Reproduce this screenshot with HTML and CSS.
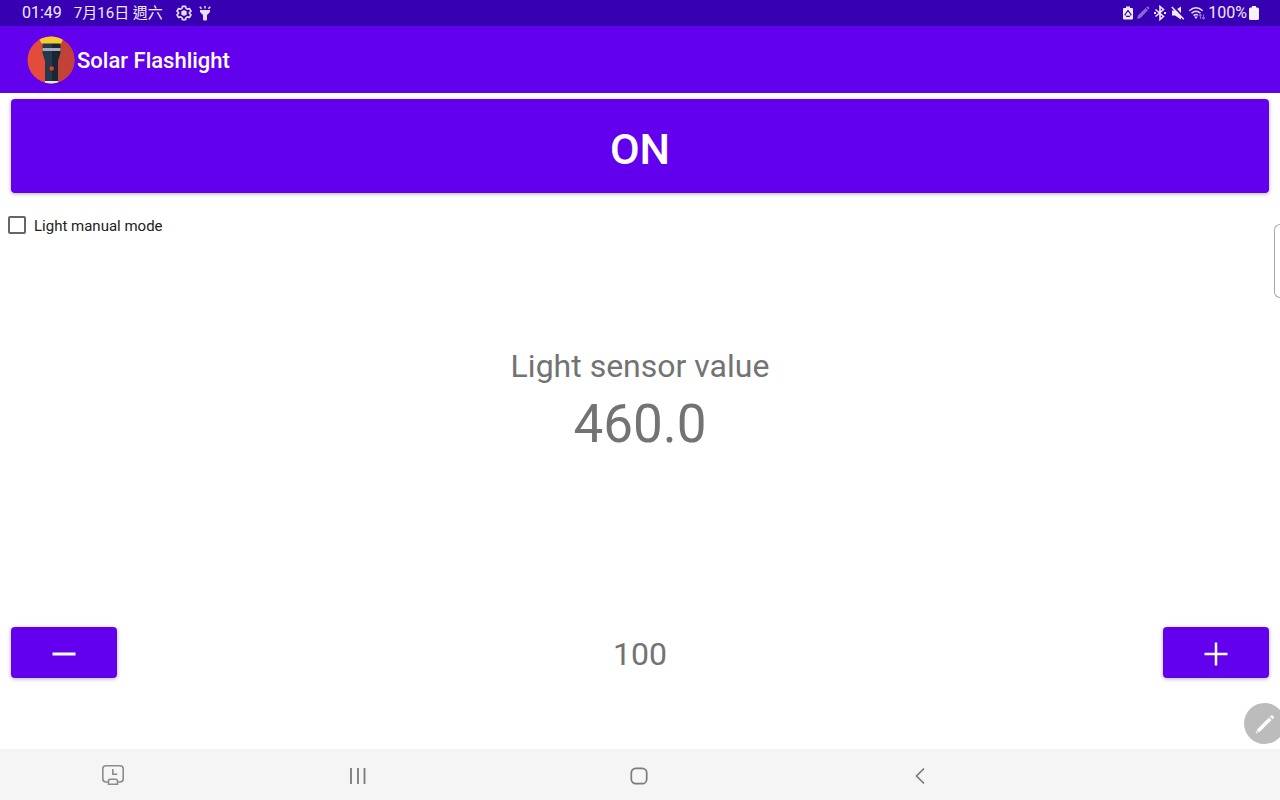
FILE: index.html
```html
<!DOCTYPE html>
<html lang="en">
<head>
  <meta charset="UTF-8">
  <meta name="viewport" content="width=device-width, initial-scale=1">
  <title>Solar Flashlight</title>
  <link rel="stylesheet" href="styles.css">
</head>
<body>
  <div class="status-bar">
    <div class="status-left">
      <span>01:49</span>
      <span class="date" lang="zh-Hant">7月16日 週六</span>
      <svg class="gear" width="16" height="16" viewBox="0 0 24 24" fill="none" stroke="#e8e0fa" stroke-width="2.4" stroke-linejoin="round">
        <path d="M9.6 2h4.8l.7 3 2 1.200 3-1 2.400 4.200-2.300 2v1.200l2.300 2-2.400 4.200-3-1-2 1.200-.7 3H9.600l-.7-3-2-1.200-3 1-2.400-4.200 2.300-2v-1.200l-2.300-2 2.400-4.200 3 1 2-1.200z"/>
        <circle cx="12" cy="12" r="3" fill="#e8e0fa"/>
      </svg>
      <svg width="14" height="16" viewBox="0 0 14 16" fill="#e8e0fa">
        <path d="M2 5h10v2L9 10v4.500a1 1 0 0 1-1 1H6a1 1 0 0 1-1-1V10L2 7z"/>
        <path d="M7 1v2.500M1.800 1.800l1.700 2M12.200 1.800l-1.700 2" stroke="#e8e0fa" stroke-width="1.500"/>
      </svg>
    </div>
    <div class="status-right">
      <svg width="12" height="16" viewBox="0 0 12 16">
        <path d="M4 1.500h4V3h2q1 0 1 1v9.500q0 1-1 1H2q-1 0-1-1V4q0-1 1-1h2z" fill="#f0eafc"/>
        <path d="M3.600 10.500L3 9.500l3-4 3 4-.6 1M4 11.300h4" fill="none" stroke="#3700b3" stroke-width="1.200"/>
      </svg>
      <svg width="14" height="14" viewBox="0 0 14 14" fill="#8a69d6">
        <path d="M1 13l1-3.600L9.600 2l2.300 2.300L4.500 12zM10.200 1.400l.9-.9q.7-.3 1.300.3l.7.7q.5.7.1 1.300l-.8.8z"/>
      </svg>
      <svg width="16" height="16" viewBox="0 0 16 16" fill="none" stroke="#f0eafc" stroke-width="1.600">
        <path d="M3.500 4.500l8 7L8 14.500v-13l3.500 3-8 7"/>
        <path d="M2 8h2M12 8h2" stroke-width="2"/>
      </svg>
      <svg width="16" height="16" viewBox="0 0 16 16">
        <path d="M2 5.500h3L11 1.500v13l-6-4H2z" fill="#f0eafc"/>
        <path d="M3 1l12 13" stroke="#3700b3" stroke-width="2"/>
        <path d="M1.800 2l12 12.200" stroke="#f0eafc" stroke-width="1.500"/>
      </svg>
      <svg width="18" height="16" viewBox="0 0 18 16" fill="none" stroke="#e8e0fa" stroke-width="1.500">
        <path d="M1.300 5.800q6.700-6 13.400 0M3.500 8.300q4.500-4 9 0M5.600 10.600q2.400-2 4.400-.3"/>
        <path d="M6.200 11.600L8 14l1.800-2.400z" fill="#e8e0fa" stroke="none"/>
        <path d="M12.500 14V9.700M11 11l1.500-1.500L13.500 11M15.500 9.500v4M14 12.500l1.500 1.500 1.500-1.500" stroke="#8a69d6" stroke-width="1.200"/>
      </svg>
      <span class="battery-level">100%</span>
      <svg width="10" height="16" viewBox="0 0 10 16" fill="#f5f1ff">
        <path d="M3 1h4v1.500h1.400q1.600 0 1.600 1.500v9.500q0 1.500-1.500 1.500h-7Q0 15 0 13.500V4q0-1.500 1.500-1.500H3z"/>
      </svg>
    </div>
  </div>

  <header class="app-bar">
    <svg width="48" height="48" viewBox="0 0 48 48">
      <defs>
        <clipPath id="disc"><circle cx="24" cy="24" r="23.500"/></clipPath>
      </defs>
      <g clip-path="url(#disc)">
        <rect width="48" height="48" fill="#e34b3b"/>
        <path d="M24 0h24v48H24z" fill="#c24236"/>
        <path d="M12 0h24v3l-2 5H15l-3-5z" fill="#f6cb2f"/>
        <path d="M15.500 7.500H25V45h-7V25l-2.500-8z" fill="#26384b"/>
        <path d="M25 7.500h8.500V17L31 25v20h-6z" fill="#182736"/>
        <path d="M15.500 12h18v3h-18z" fill="#a6adb4"/>
        <path d="M18 45h13v3H18z" fill="#e4e8ea"/>
      </g>
      <circle cx="24.700" cy="32.500" r="2.200" fill="#e83c2c"/>
    </svg>
    <h1>Solar Flashlight</h1>
  </header>

  <main class="content">
    <button type="button" class="btn btn-power">ON</button>

    <div class="mode">
      <input type="checkbox" id="manualMode">
      <label for="manualMode">Light manual mode</label>
    </div>

    <div class="sensor">
      <p class="sensor-label">Light sensor value</p>
      <p class="sensor-value">460.0</p>
    </div>

    <div class="threshold">
      <button type="button" class="btn btn-step" aria-label="Decrease">
        <svg width="24" height="24" viewBox="0 0 24 24"><path d="M.5 12h23" stroke="#fff" stroke-width="3"/></svg>
      </button>
      <span class="threshold-value">100</span>
      <button type="button" class="btn btn-step" aria-label="Increase">
        <svg width="24" height="24" viewBox="0 0 24 24"><path d="M.5 12h23M12 .5v23" stroke="#fff" stroke-width="2.500"/></svg>
      </button>
    </div>
  </main>

  <nav class="nav-bar">
    <button type="button" class="nav-taskbar" aria-label="Recent apps tray">
      <svg width="24" height="22" viewBox="0 0 24 22" fill="none" stroke="#8c8c8c" stroke-width="1.600">
        <path d="M7 17H5q-3.200 0-3.200-3.200V4Q1.800.8 5 .8h14q3.200 0 3.200 3.200v9.800q0 3.200-3.200 3.200h-2"/>
        <path d="M11.800 4v5.300h4.400"/>
        <path d="M9.500 14.300h5q2 0 2 2v3h-9v-3q0-2 2-2z"/>
      </svg>
    </button>
    <button type="button" aria-label="Recents">
      <svg width="18" height="18" viewBox="0 0 18 18" stroke="#7b7b7b" stroke-width="1.800"><path d="M2 1v16M9 1v16M15.500 1v16"/></svg>
    </button>
    <button type="button" aria-label="Home">
      <svg width="18" height="18" viewBox="0 0 18 18" fill="none" stroke="#7b7b7b" stroke-width="1.700"><rect x="1.300" y="1.300" width="15.400" height="15.400" rx="4.500"/></svg>
    </button>
    <button type="button" aria-label="Back">
      <svg width="18" height="18" viewBox="0 0 18 18" fill="none" stroke="#7b7b7b" stroke-width="1.700"><path d="M13 1.500L5.500 9l7.500 7.500"/></svg>
    </button>
  </nav>

  <!-- overlays docked to the right edge -->
  <div class="edge-handle"></div>
  <button type="button" class="pen" aria-label="Pen menu">
    <svg width="22" height="22" viewBox="0 0 22 22" fill="#fff">
      <path d="M1.500 20.500l2-4.500L15 4.500 17.500 7 6 18.500zM16 3.500l1-1q.8-.6 1.600.1l1 1q.7.8 0 1.600l-1 1z"/>
      <path d="M2.500 17.200l2.300 2.300" stroke="#bcbcbc"/>
    </svg>
  </button>
</body>
</html>
```

FILE: styles.css
```css
* {
  box-sizing: border-box;
}
body {
  margin: 0;
  min-height: 100vh;
  display: flex;
  flex-direction: column;
  position: relative;
  overflow-x: hidden;
  background-color: #fff;
  font-family: Roboto, "Noto Sans CJK TC", sans-serif;
}
h1, p {
  margin: 0;
}
svg {
  display: block;
  flex: none;
}
button {
  border: none;
  padding: 0;
  font-family: inherit;
  cursor: pointer;
}

/* system status bar */
.status-bar {
  height: 26px;
  padding: 0 21px 0 22px;
  display: flex;
  justify-content: space-between;
  align-items: center;
  background-color: #3700b3;
  color: #f0eafc;
  font-size: 16px;
  line-height: 24px;
}
.status-left,
.status-right {
  display: flex;
  align-items: center;
}
.date {
  margin-left: 12px;
  font-size: 15px;
}
.gear {
  margin: 0 6px 0 13px;
}
.status-right {
  gap: 2px;
}

.app-bar {
  height: 67px;
  padding: 0 27px;
  display: flex;
  align-items: center;
  gap: 2px;
  background-color: #6200ee;
  color: #fff;
}
.app-bar h1 {
  padding-top: 2px;
  font-size: 22px;
  line-height: 28px;
  font-weight: 500;
}

.content {
  flex: 1;
  display: flex;
  flex-direction: column;
  padding: 6px 11px 71px;
}
.btn {
  display: flex;
  justify-content: center;
  align-items: center;
  border-radius: 4px;
  background-color: #6200ee;
  color: #fff;
  box-shadow: 0 1px 4px rgba(0, 0, 0, 0.3);
}
.btn-power {
  height: 94px;
  padding-top: 6px;
  font-size: 43px;
  font-weight: 500;
}
.mode {
  display: flex;
  align-items: center;
  gap: 8px;
  height: 24px;
  margin: 20px 0 0 -3px;
}
.mode input {
  appearance: none;
  width: 18px;
  height: 18px;
  margin: 0;
  border: 2px solid #666;
  border-radius: 2px;
}
.mode input:checked {
  background-color: #6200ee;
}
.mode label {
  padding-top: 2px;
  font-size: 15px;
  color: #222;
}
.sensor {
  flex: 1;
  display: flex;
  flex-direction: column;
  justify-content: center;
  padding-bottom: 61px;
  text-align: center;
  color: #737373;
}
.sensor-label {
  font-size: 32px;
  line-height: 44px;
}
.sensor-value {
  font-size: 53px;
  line-height: 72px;
}
.threshold {
  display: flex;
  justify-content: space-between;
  align-items: center;
}
.btn-step {
  width: 106px;
  height: 51px;
  padding-top: 2px;
}
.threshold-value {
  padding-top: 2px;
  font-size: 32px;
  line-height: 44px;
  color: #737373;
}

/* system navigation */
.nav-bar {
  height: 51px;
  padding: 2px 2px 0 0;
  display: grid;
  grid-template-columns: 17fr 22fr 22fr 22fr 17fr;
  background-color: #f5f5f5;
}
.nav-bar button {
  display: flex;
  justify-content: center;
  align-items: center;
  background: none;
}
.nav-bar .nav-taskbar {
  padding-left: 9px;
}

.edge-handle {
  position: absolute;
  top: 224px;
  right: 0;
  width: 6px;
  height: 74px;
  border: 1px solid #aaa;
  border-right: none;
  border-radius: 6px 0 0 6px;
}
.pen {
  position: absolute;
  right: -5px;
  bottom: 56px;
  width: 41px;
  height: 41px;
  padding-left: 10px;
  border-radius: 50%;
  background-color: #bcbcbc;
}
```
